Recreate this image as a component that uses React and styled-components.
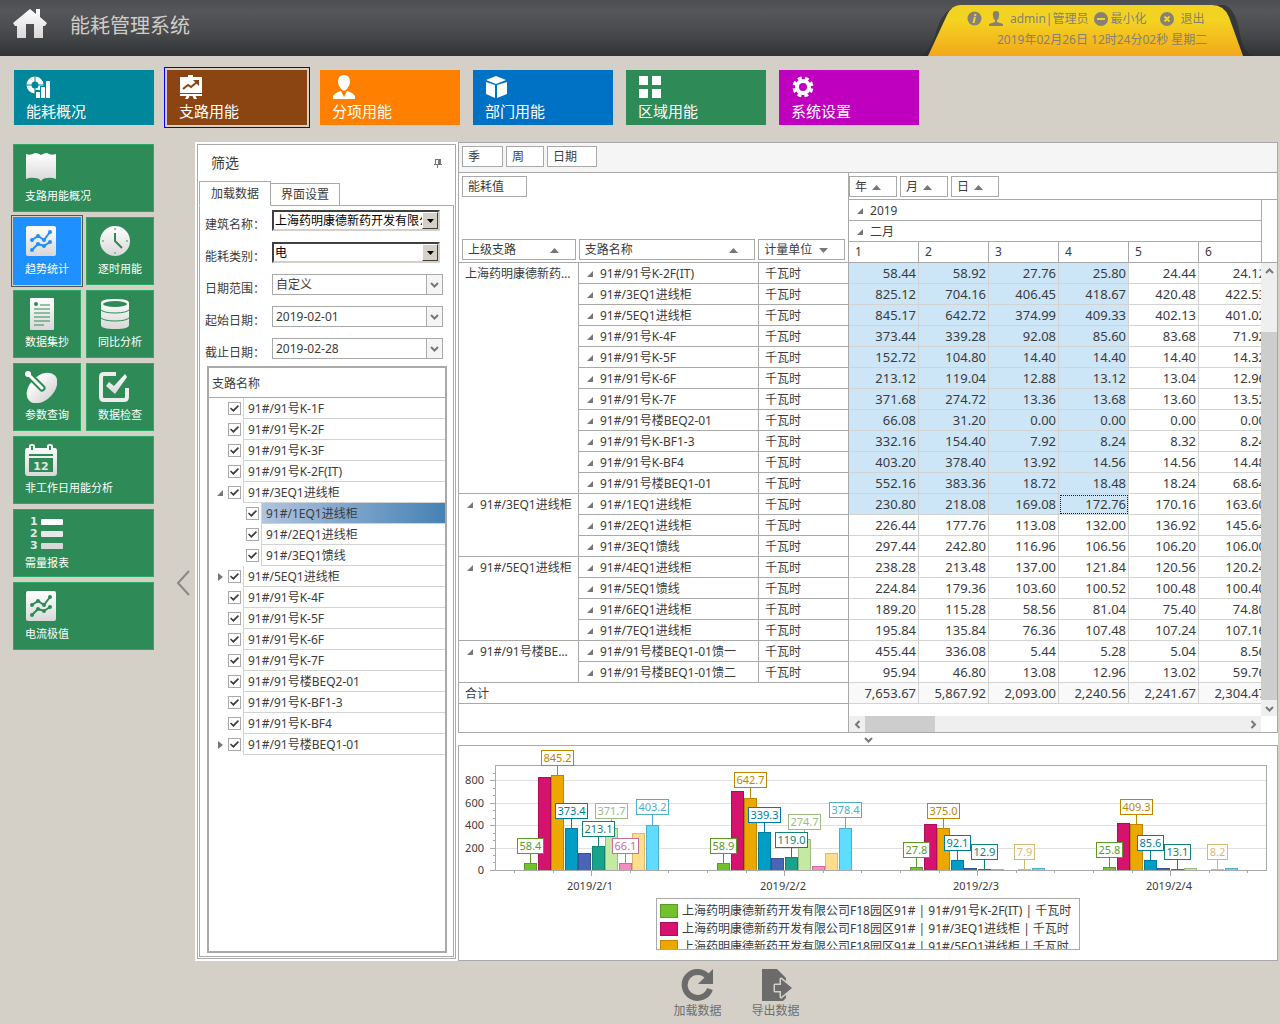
import React, { useState } from 'react';
import styled, { createGlobalStyle, css } from 'styled-components';

const GlobalStyle = createGlobalStyle`
  * {
    box-sizing: border-box;
  }
  body {
    margin: 0;
    background: #d4d0c8;
    color: #3b3b3b;
    font-family: 'Noto Sans', 'Noto Sans CJK SC', sans-serif;
    font-size: 12px;
    line-height: 16px;
  }
  button, select, input {
    font: inherit;
    color: inherit;
  }
  button {
    border: none;
    padding: 0;
    background: none;
    cursor: pointer;
  }
  svg {
    display: block;
    flex: none;
  }
`;

const Page = styled.div`
  display: flex;
  flex-direction: column;
  min-height: 100vh;
`;

/* ---------- header ---------- */

const Header = styled.header`
  display: flex;
  justify-content: space-between;
  height: 56px;
  padding-right: 37px;
  background: linear-gradient(#4d4e52, #55565a 20%, #4a4b4e 55%, #303436);
`;

const Brand = styled.div`
  display: flex;
  align-items: center;
  gap: 22px;
  padding: 0 0 8px 12px;
`;

const Title = styled.h1`
  margin: 0;
  padding-top: 4px;
  color: #d0cdc6;
  font-size: 20px;
  line-height: 28px;
  font-weight: 400;
`;

const Account = styled.div`
  position: relative;
  width: 315px;
  color: #858078;
  padding-top: 10px;
`;

const AccountShape = styled.svg`
  position: absolute;
  left: -8px;
  bottom: 0;
`;

const AccountRow = styled.div`
  position: relative;
  display: flex;
  align-items: center;
  height: 17px;
  padding-left: 39px;
`;

const AccountName = styled.span`
  margin: 0 6px;
`;

const AccountButton = styled.button`
  display: flex;
  align-items: center;
  gap: ${(p) => p.$gap || 2}px;
  margin-right: 14px;
`;

const Clock = styled.div`
  position: relative;
  padding: 5px 0 0 69px;
  white-space: nowrap;
`;

/* ---------- top navigation ---------- */

const TopNav = styled.nav`
  display: flex;
  gap: 13px;
  padding: 14px 14px 17px;
`;

const TopTile = styled.button`
  display: flex;
  flex-direction: column;
  align-items: flex-start;
  width: 140px;
  height: 55px;
  padding: 5px 12px 0;
  background: ${(p) => p.$color};
  color: #fff;
  font-size: 15px;
  line-height: 20px;
  text-align: left;
  outline: ${(p) => (p.$active ? '1px solid #0000ff' : 'none')};
  outline-offset: 2px;
  svg {
    margin-bottom: 2px;
  }
`;

/* ---------- left column ---------- */

const Body = styled.div`
  display: flex;
  flex: 1;
  padding: 0 2px 0 13px;
`;

const Sidebar = styled.nav`
  display: grid;
  grid-template-columns: 68px 68px;
  grid-auto-rows: 68px;
  gap: 5px;
  padding-top: 2px;
`;

const SideTile = styled.button`
  display: flex;
  flex-direction: column;
  align-items: flex-start;
  grid-column: span ${(p) => (p.$wide ? 2 : 1)};
  padding: 7px 0 0 11px;
  border: 1px solid #2fa866;
  background: #2e8b57;
  color: #fff;
  font-size: 11px;
  line-height: 16px;
  text-align: left;
  white-space: nowrap;
  ${(p) => p.$active && css`
    border-color: #1e90ff;
    background: #1e90ff;
    outline: 1px solid #555;
    outline-offset: 1px;
  `}
  svg {
    margin-bottom: 4px;
  }
`;

const Collapse = styled.button`
  display: flex;
  align-items: center;
  justify-content: flex-end;
  width: 41px;
  padding-right: 5px;
`;

const Content = styled.div`
  display: flex;
  flex-direction: column;
  flex: 1;
  min-width: 0;
`;

const Workspace = styled.main`
  display: flex;
  flex: 1;
  background: #fff;
`;

/* ---------- filter panel ---------- */

const FilterPanel = styled.section`
  display: flex;
  flex-direction: column;
  width: 259px;
  margin: 2px 2px 2px 2px;
  padding: 0 1px 1px;
  border: 1px solid #a9a9a9;
`;

const FilterHead = styled.div`
  display: flex;
  align-items: center;
  justify-content: space-between;
  height: 36px;
  padding: 0 12px;
`;

const FilterTitle = styled.h2`
  margin: 0;
  font-size: 14px;
  font-weight: 400;
`;

const Tabs = styled.div`
  display: flex;
  align-items: flex-end;
  &::after {
    content: '';
    flex: 1;
    border-bottom: 1px solid #a9a9a9;
  }
`;

const Tab = styled.button`
  width: ${(p) => (p.$active ? 72 : 69)}px;
  height: ${(p) => (p.$active ? 25 : 23)}px;
  padding-top: 1px;
  border: 1px solid #a9a9a9;
  border-bottom-color: ${(p) => (p.$active ? '#fff' : '#a9a9a9')};
  border-left-width: ${(p) => (p.$active ? 1 : 0)}px;
`;

const TabPage = styled.div`
  display: flex;
  flex-direction: column;
  flex: 1;
  padding: 0 4px 3px 3px;
  border: 1px solid #a9a9a9;
  border-top: none;
`;

const Field = styled.div`
  display: grid;
  grid-template-columns: 69px ${(p) => (p.$sunken ? '168px' : '171px')};
  height: 32px;
`;

const FieldLabel = styled.label`
  padding: 11px 0 0 2px;
`;

const SelectBox = styled.div`
  position: relative;
  height: 21px;
  margin-top: 4px;
  border: 1px solid #a9a9a9;
  ${(p) => p.$sunken && css`
    border-width: 2px;
    border-color: #404040 #d4d0c8 #d4d0c8 #404040;
    color: #000;
  `}
`;

const Select = styled.select`
  width: 100%;
  height: 100%;
  padding: 1px 16px 0 ${(p) => (p.$sunken ? 1 : 3)}px;
  border: none;
  border-radius: 0;
  background: #fff;
  appearance: none;
`;

const Arrow = styled.span`
  position: absolute;
  top: 0;
  right: 0;
  bottom: 0;
  display: grid;
  place-items: center;
  width: 16px;
  pointer-events: none;
  border-left: 1px solid #a9a9a9;
  background: #f5f5f5;
  ${(p) => p.$sunken && css`
    border: 1px solid;
    border-color: #fff #404040 #404040 #fff;
    background: #d4d0c8;
  `}
`;

const Tree = styled.div`
  flex: 1;
  margin: 0 2px 0 4px;
  border: 2px solid #a9a9a9;
`;

const TreeHead = styled.div`
  height: 30px;
  padding: 8px 3px 0;
  border-bottom: 1px solid #a9a9a9;
`;

const TreeRow = styled.div`
  display: flex;
  align-items: stretch;
  height: 21px;
  padding-left: ${(p) => (p.$level ? 24 : 6)}px;
`;

const TreeToggle = styled.span`
  display: flex;
  align-items: center;
  justify-content: center;
  width: 10px;
  margin-right: 3px;
`;

const Check = styled.input`
  display: grid;
  place-items: center;
  width: 13px;
  height: 13px;
  margin: 4px 2px 0 0;
  border: 1px solid #a9a9a9;
  background: #fff;
  appearance: none;
  &:checked::after {
    content: '';
    width: 9px;
    height: 7px;
    background: #3b3b3b;
    clip-path: polygon(0 50%, 12% 34%, 36% 64%, 88% 0, 100% 18%, 38% 100%);
  }
`;

const TreeLabel = styled.label`
  flex: 1;
  padding: 3px 4px 0;
  border-left: 1px solid #d3d3d3;
  border-bottom: 1px solid #d3d3d3;
  background: ${(p) => (p.$selected ? 'linear-gradient(90deg, #b0c4de, #4682b4)' : '#fff')};
`;

/* ---------- pivot ---------- */

const RightPane = styled.div`
  display: flex;
  flex-direction: column;
  flex: 1;
  min-width: 0;
`;

const Pivot = styled.section`
  border: 1px solid #a9a9a9;
`;

const FieldRow = styled.div`
  display: flex;
  gap: 3px;
  padding: 3px;
`;

const FilterFields = styled(FieldRow)`
  height: 30px;
  background: #f5f5f5;
  border-bottom: 1px solid #a9a9a9;
`;

const FieldButton = styled.button`
  display: flex;
  align-items: center;
  justify-content: ${(p) => (p.$spread ? 'space-between' : 'flex-start')};
  gap: 5px;
  width: ${(p) => p.$w}px;
  height: 21px;
  padding: 1px ${(p) => (p.$spread ? 16 : 4)}px 0 5px;
  border: 1px solid #a9a9a9;
  background: #fff;
`;

const PivotGrid = styled.div`
  display: grid;
  grid-template-columns: minmax(0, 1fr) 16px;
`;

const TableWrap = styled.div`
  overflow: hidden;
`;

const Table = styled.table`
  width: 810px;
  table-layout: fixed;
  border-collapse: separate;
  border-spacing: 0;
  th, td {
    height: 21px;
    padding: 0;
    font-weight: 400;
    text-align: left;
    line-height: 18px;
    white-space: nowrap;
    overflow: hidden;
    text-overflow: ellipsis;
    border: solid #a9a9a9;
    border-width: 0 1px 1px 0;
  }
`;

const CornerCell = styled.th`
  && {
    vertical-align: top;
  }
`;

const Corner = styled.div`
  display: flex;
  flex-direction: column;
  justify-content: space-between;
  height: 89px;
  ${FieldRow}:last-child {
    padding-bottom: 2px;
  }
`;

const ColumnFields = styled.th`
  && {
    height: 27px;
    border-right: none;
  }
  ${FieldRow} {
    padding: 1px 0 0 0;
  }
`;

const HeadCell = styled.th`
  && {
    padding-left: ${(p) => (p.$group ? 8 : 6)}px;
  }
`;

const RowHead = styled.th`
  && {
    padding: 0 4px 0 ${(p) => (p.$flush ? 6 : 8)}px;
    vertical-align: top;
    line-height: 20px;
  }
`;

const RowHeadInner = styled.div`
  display: flex;
  align-items: center;
  gap: 7px;
  height: 20px;
  padding-top: 1px;
  span {
    overflow: hidden;
    text-overflow: ellipsis;
  }
`;

const Value = styled.td`
  && {
    padding-right: 2px;
    font-size: 13px;
    text-align: right;
    text-overflow: clip;
    border-color: #d3d3d3;
    background: ${(p) => (p.$total ? '#f9f9f9' : p.$selected ? '#cde6f7' : '#fff')};
    outline: ${(p) => (p.$focused ? '1px dotted #222' : 'none')};
    outline-offset: -2px;
  }
`;

const Filler = styled.div`
  width: 390px;
  height: 12px;
  border-right: 1px solid #a9a9a9;
`;

const ScrollColumn = styled.div`
  display: flex;
  flex-direction: column;
`;

const ScrollTop = styled.div`
  height: 27px;
  border-bottom: 1px solid #a9a9a9;
`;

const ScrollHead = styled.div`
  height: 63px;
  border-left: 1px solid #a9a9a9;
  border-bottom: 1px solid #a9a9a9;
`;

const ScrollTrack = styled.div`
  display: flex;
  flex-direction: ${(p) => (p.$vertical ? 'column' : 'row')};
  justify-content: space-between;
  flex: 1;
  background: #efefef;
`;

const ScrollButton = styled.button`
  display: grid;
  place-items: center;
  width: 16px;
  height: 16px;
`;

const VThumb = styled.div`
  flex: 1;
  margin-top: 53px;
  background: #cdcdcd;
`;

const HThumb = styled.div`
  width: 70px;
  margin-right: auto;
  background: #cdcdcd;
`;

const ScrollRow = styled.div`
  display: flex;
  height: 16px;
  &::before {
    content: '';
    width: 390px;
    border-right: 1px solid #a9a9a9;
    box-sizing: border-box;
  }
`;

const Splitter = styled.div`
  display: flex;
  align-items: center;
  justify-content: center;
  height: 12px;
`;

/* ---------- chart ---------- */

const ChartPanel = styled.section`
  flex: 1;
  padding-bottom: 10px;
  border: 1px solid #a9a9a9;
`;

const Legend = styled.ul`
  width: 424px;
  height: 52px;
  margin: 0 auto;
  padding: 3px;
  overflow: hidden;
  list-style: none;
  border: 1px solid #a9a9a9;
`;

const LegendItem = styled.li`
  display: flex;
  align-items: center;
  gap: 4px;
  height: 18px;
  white-space: nowrap;
  &::before {
    content: '';
    box-sizing: border-box;
    width: 18px;
    height: 14px;
    background: ${(p) => p.$color};
    border: 1px solid ${(p) => p.$line};
  }
`;

/* ---------- footer ---------- */

const Footer = styled.footer`
  display: flex;
  justify-content: center;
  gap: 30px;
  height: 63px;
  padding-top: 7px;
`;

const FooterButton = styled.button`
  display: flex;
  flex-direction: column;
  align-items: center;
  gap: 1px;
  color: #6e6e6e;
  height: 51px;
`;

/* ---------- small glyphs ---------- */

const chevrons = {
  up: 'M2 7 L5.5 3.5 L9 7',
  down: 'M2 4 L5.5 7.5 L9 4',
  left: 'M7.5 2 L4 5.5 L7.5 9',
  right: 'M3.5 2 L7 5.5 L3.5 9',
};

const Chevron = ({ dir }) => (
  <svg width="11" height="11">
    <path d={chevrons[dir]} fill="none" stroke="#777" strokeWidth="2" />
  </svg>
);

const Sort = ({ down }) => (
  <svg width="9" height="5">
    <path d={down ? 'M0 0 H9 L4.5 5 Z' : 'M0 5 H9 L4.5 0 Z'} fill="#777" />
  </svg>
);

const Expanded = () => (
  <svg width="6" height="6"><path d="M6 0 V6 H0 Z" fill="#777" /></svg>
);

const Collapsed = () => (
  <svg width="5" height="8"><path d="M0 0 L5 4 L0 8 Z" fill="#777" /></svg>
);

const SHINE = 'url(#shine)';

const TrendIcon = ({ hole }) => (
  <svg width="32" height="32">
    <rect x="1" y="1" width="30" height="30" rx="2" fill={SHINE} />
    <g stroke={hole} fill={hole} strokeWidth="2">
      <path d="M7 15 L13 11 L19 15 L25 7 M7 25 L13 19 L19 21 L25 17" fill="none" />
      {[[7, 15], [13, 11], [19, 15], [25, 7], [7, 25], [13, 19], [19, 21], [25, 17]].map(([x, y]) => (
        <circle key={`${x}-${y}`} cx={x} cy={y} r="1" />
      ))}
    </g>
  </svg>
);

const sideIcons = {
  book: (
    <svg width="32" height="32">
      <path d="M1 2 Q5 4 10 1 Q13 1 16 3 Q19 1 22 1 Q26 4 31 2 V27 Q26 25 22 26 Q18 26 16 29 Q14 26 10 26 Q5 25 1 27 Z" fill={SHINE} />
    </svg>
  ),
  clock: (
    <svg width="32" height="32">
      <circle cx="17" cy="16" r="15" fill={SHINE} />
      <path d="M17 8 V16 L24 23" fill="none" stroke="#2e8b57" strokeWidth="2" />
      <path d="M16 3h2v2h-2z M16 27h2v2h-2z M4 15h2v2h-2z M28 15h2v2h-2z" fill="#8fbfa3" />
    </svg>
  ),
  doc: (
    <svg width="32" height="32">
      <rect x="5" y="0" width="24" height="32" rx="1" fill={SHINE} />
      <circle cx="11" cy="6" r="2" fill="#2e8b57" />
      <path d="M15 7h10 M9 11h16 M9 15h16 M9 19h16 M9 23h16 M9 27h10" stroke="#2e8b57" />
    </svg>
  ),
  database: (
    <svg width="32" height="32">
      <path d="M3 5 Q3 1 17 1 Q31 1 31 5 V27 Q31 31 17 31 Q3 31 3 27 Z" fill={SHINE} />
      <ellipse cx="17" cy="6" rx="12" ry="3" fill="#2e8b57" />
      <path d="M2 11 Q5 15 17 15 Q29 15 32 11 M2 19 Q5 23 17 23 Q29 23 32 19" fill="none" stroke="#2e8b57" />
    </svg>
  ),
  dish: (
    <svg width="32" height="32">
      <ellipse cx="17" cy="17" rx="18" ry="12" transform="rotate(-45 17 17)" fill={SHINE} />
      <path d="M3 3 L17 17" stroke="#2e8b57" strokeWidth="7" strokeLinecap="round" />
      <path d="M3 3 L17 17" stroke="#fff" strokeWidth="3" strokeLinecap="round" />
      <circle cx="3" cy="3" r="3" fill="#fff" />
    </svg>
  ),
  check: (
    <svg width="32" height="32">
      <path d="M18 3 H6 Q3 3 3 6 V26 Q3 29 6 29 H26 Q29 29 29 26 V17" fill="none" stroke="#ececec" strokeWidth="4" />
      <path d="M8 15 L11 11 L16 15 L27 3 L29 6 L17 23 Z" fill={SHINE} />
    </svg>
  ),
  calendar: (
    <svg width="32" height="32">
      <path d="M2 4 H4 V2 Q4 0 7 0 Q10 0 10 2 V4 H22 V2 Q22 0 25 0 Q28 0 28 2 V4 H30 Q32 4 32 7 V29 Q32 32 29 32 H3 Q0 32 0 29 V7 Q0 4 2 4 Z" fill={SHINE} />
      <path d="M7 2v4 M25 2v4" stroke="#2e8b57" strokeWidth="2" />
      <path d="M4 11 H28" stroke="#2e8b57" strokeWidth="2" />
      <rect x="4" y="14" width="24" height="14" fill="#2e8b57" />
      <text x="16" y="26" textAnchor="middle" fontSize="11" fontWeight="700" fontFamily="DejaVu Sans, sans-serif" fill="#e6e6e6">12</text>
    </svg>
  ),
  list: (
    <svg width="40" height="34">
      <g fontSize="11" fontWeight="700" fontFamily="DejaVu Sans, sans-serif" fill="#dfe8e2">
        <text x="5" y="8">1</text>
        <text x="5" y="20">2</text>
        <text x="5" y="32">3</text>
      </g>
      <rect x="16" y="2" width="22" height="6" rx="1" fill="#fff" />
      <rect x="16" y="14" width="22" height="6" rx="1" fill="#e8e8e8" />
      <rect x="16" y="26" width="22" height="6" rx="1" fill="#d8d8d8" />
    </svg>
  ),
  trendBlue: <TrendIcon hole="#1e90ff" />,
  trend: <TrendIcon hole="#2e8b57" />,
};

const topIcons = {
  overview: (
    <svg width="26" height="24">
      <circle cx="9" cy="10" r="6" fill="none" stroke="#fff" strokeWidth="5" />
      <path d="M9 1v6 M9 13v6 M0 10h6 M12 10h6" stroke="#00879c" strokeWidth="1" />
      <path d="M9 15h5v-4h5v-5h6v18h-16z" fill="#00879c" />
      <path d="M10 17h4v6h-4z M15 12h4v11h-4z M20 6h4v17h-4z" fill="#fff" />
    </svg>
  ),
  board: (
    <svg width="24" height="24">
      <path d="M9 0h5v2h9v16H1V2h8z M1 19h22v2H1z M8 20h3l-2 4H6z M13 20h3l2 4h-3z" fill="#fff" />
      <path d="M0 18.500H23" stroke="#8b4513" />
      <path d="M4 14 L9 10 L12 12 L18 7" fill="none" stroke="#8b4513" strokeWidth="2" />
      <path d="M14 5h6v6z" fill="#8b4513" />
    </svg>
  ),
  person: (
    <svg width="24" height="24">
      <path d="M12 0 Q18 0 18 7 Q18 10 15 14 L12 16 L9 14 Q6 10 6 7 Q6 0 12 0 Z" fill="#fff" />
      <path d="M1 24 V21 Q4 17 9 16 L12 22 L15 16 Q20 17 23 21 V24 Z" fill="#fff" />
    </svg>
  ),
  box: (
    <svg width="24" height="24">
      <path d="M11 1 L21 5 L11 9 L1 5 Z M1 7 L10 10 V23 L1 19 Z M22 7 L12 10 V23 L22 19 Z" fill="#fff" />
    </svg>
  ),
  squares: (
    <svg width="24" height="24">
      <path d="M1 1h9v9H1z M14 1h9v9h-9z M1 14h9v9H1z M14 14h9v9h-9z" fill="#fff" />
    </svg>
  ),
  gear: (
    <svg width="24" height="24">
      <circle cx="12" cy="12" r="6" fill="none" stroke="#fff" strokeWidth="4" />
      <circle cx="12" cy="12" r="9" fill="none" stroke="#fff" strokeWidth="3" strokeDasharray="4 3.070" transform="rotate(10 12 12)" />
    </svg>
  ),
};

const HomeIcon = () => (
  <svg width="36" height="30">
    <path d="M18 0 L24 5 V0 H28 V8 L35 14 L33 17 H31 V29 H22 V15 H14 V29 H5 V17 H3 L1 14 Z" fill={SHINE} />
  </svg>
);

const RefreshIcon = () => (
  <svg width="34" height="34">
    <path d="M28 9 A13 13 0 1 0 30 21" fill="none" stroke="#6b6b6b" strokeWidth="6" />
    <path d="M33 1 V16 H18 Z" fill="#6b6b6b" />
  </svg>
);

const ExportIcon = () => (
  <svg width="34" height="34">
    <path d="M3 1 H18 L27 10 V30 L24 33 H3 Z" fill="#6b6b6b" />
    <path d="M16 17 H22 V11 L33 20 L22 29 V23 H16 Z" fill="#d4d0c8" stroke="#d4d0c8" strokeWidth="3" strokeLinejoin="round" />
    <path d="M16 17 H22 V11 L33 20 L22 29 V23 H16 Z" fill="#6b6b6b" />
  </svg>
);

/* ---------- data ---------- */

const topTiles = [
  ['能耗概况', '#00879c', 'overview'],
  ['支路用能', '#8b4513', 'board'],
  ['分项用能', '#ff8000', 'person'],
  ['部门用能', '#0072c6', 'box'],
  ['区域用能', '#2e8b57', 'squares'],
  ['系统设置', '#bf00bf', 'gear'],
];

const sideTiles = [
  { label: '支路用能概况', icon: 'book', wide: true },
  { label: '趋势统计', icon: 'trendBlue', active: true },
  { label: '逐时用能', icon: 'clock' },
  { label: '数据集抄', icon: 'doc' },
  { label: '同比分析', icon: 'database' },
  { label: '参数查询', icon: 'dish' },
  { label: '数据检查', icon: 'check' },
  { label: '非工作日用能分析', icon: 'calendar', wide: true },
  { label: '需量报表', icon: 'list', wide: true },
  { label: '电流极值', icon: 'trend', wide: true },
];

const filters = [
  { id: 'building', label: '建筑名称：', value: '上海药明康德新药开发有限公司', sunken: true },
  { id: 'energy', label: '能耗类别：', value: '电', sunken: true },
  { id: 'range', label: '日期范围：', value: '自定义' },
  { id: 'start', label: '起始日期：', value: '2019-02-01' },
  { id: 'end', label: '截止日期：', value: '2019-02-28' },
];

const tree = [
  { name: '91#/91号K-1F' },
  { name: '91#/91号K-2F' },
  { name: '91#/91号K-3F' },
  { name: '91#/91号K-2F(IT)' },
  { name: '91#/3EQ1进线柜', open: true },
  { name: '91#/1EQ1进线柜', level: 1, selected: true },
  { name: '91#/2EQ1进线柜', level: 1 },
  { name: '91#/3EQ1馈线', level: 1 },
  { name: '91#/5EQ1进线柜', open: false },
  { name: '91#/91号K-4F' },
  { name: '91#/91号K-5F' },
  { name: '91#/91号K-6F' },
  { name: '91#/91号K-7F' },
  { name: '91#/91号楼BEQ2-01' },
  { name: '91#/91号K-BF1-3' },
  { name: '91#/91号K-BF4' },
  { name: '91#/91号楼BEQ1-01', open: false },
];

const groups = [
  {
    name: '上海药明康德新药开发有限公司',
    root: true,
    rows: [
      ['91#/91号K-2F(IT)', '58.44', '58.92', '27.76', '25.80', '24.44', '24.12'],
      ['91#/3EQ1进线柜', '825.12', '704.16', '406.45', '418.67', '420.48', '422.53'],
      ['91#/5EQ1进线柜', '845.17', '642.72', '374.99', '409.33', '402.13', '401.02'],
      ['91#/91号K-4F', '373.44', '339.28', '92.08', '85.60', '83.68', '71.92'],
      ['91#/91号K-5F', '152.72', '104.80', '14.40', '14.40', '14.40', '14.32'],
      ['91#/91号K-6F', '213.12', '119.04', '12.88', '13.12', '13.04', '12.96'],
      ['91#/91号K-7F', '371.68', '274.72', '13.36', '13.68', '13.60', '13.52'],
      ['91#/91号楼BEQ2-01', '66.08', '31.20', '0.00', '0.00', '0.00', '0.00'],
      ['91#/91号K-BF1-3', '332.16', '154.40', '7.92', '8.24', '8.32', '8.24'],
      ['91#/91号K-BF4', '403.20', '378.40', '13.92', '14.56', '14.56', '14.48'],
      ['91#/91号楼BEQ1-01', '552.16', '383.36', '18.72', '18.48', '18.24', '68.64'],
    ],
  },
  {
    name: '91#/3EQ1进线柜',
    rows: [
      ['91#/1EQ1进线柜', '230.80', '218.08', '169.08', '172.76', '170.16', '163.60'],
      ['91#/2EQ1进线柜', '226.44', '177.76', '113.08', '132.00', '136.92', '145.64'],
      ['91#/3EQ1馈线', '297.44', '242.80', '116.96', '106.56', '106.20', '106.00'],
    ],
  },
  {
    name: '91#/5EQ1进线柜',
    rows: [
      ['91#/4EQ1进线柜', '238.28', '213.48', '137.00', '121.84', '120.56', '120.24'],
      ['91#/5EQ1馈线', '224.84', '179.36', '103.60', '100.52', '100.48', '100.40'],
      ['91#/6EQ1进线柜', '189.20', '115.28', '58.56', '81.04', '75.40', '74.80'],
      ['91#/7EQ1进线柜', '195.84', '135.84', '76.36', '107.48', '107.24', '107.16'],
    ],
  },
  {
    name: '91#/91号楼BEQ1-01',
    rows: [
      ['91#/91号楼BEQ1-01馈一', '455.44', '336.08', '5.44', '5.28', '5.04', '8.56'],
      ['91#/91号楼BEQ1-01馈二', '95.94', '46.80', '13.08', '12.96', '13.02', '59.76'],
    ],
  },
];

const totals = ['7,653.67', '5,867.92', '2,093.00', '2,240.56', '2,241.67', '2,304.47'];

// fill, outline
const seriesColors = [
  ['#72c22e', '#5b9b25'],
  ['#d5126d', '#aa0e57'],
  ['#eda800', '#be8600'],
  ['#009dc6', '#007d9e'],
  ['#4965b8', '#3a5193'],
  ['#19a28c', '#148270'],
  ['#c3e9a2', '#9cba82'],
  ['#f58ebd', '#cc6c98'],
  ['#ffdd8a', '#d6ba74'],
  ['#5fdcff', '#4cb0cc'],
];

// labels: [series, y of the label box centre]
const days = [
  { date: '2019/2/1', labels: [[0, 100], [2, 12], [3, 65], [5, 83], [6, 65], [7, 100], [9, 61]] },
  { date: '2019/2/2', labels: [[0, 100], [2, 34], [3, 69], [6, 76], [5, 94], [9, 64]] },
  { date: '2019/2/3', labels: [[0, 104], [2, 65], [3, 97], [5, 106], [8, 106]] },
  { date: '2019/2/4', labels: [[0, 104], [2, 61], [3, 97], [5, 106], [8, 106]] },
];

const legend = ['91#/91号K-2F(IT)', '91#/3EQ1进线柜', '91#/5EQ1进线柜'];

/* ---------- components ---------- */

const ZERO = 124;
const LEFT = 36;
const STEP = 193;
const BAR = 13.5;
const toY = (v) => ZERO - Math.round(v * 0.1122);
const barX = (day, series) => Math.floor(LEFT + STEP * (day + 0.5) - 67 + series * BAR);
const chartValue = (day, series) => Number(groups[0].rows[series][day + 1]);

const Chart = () => (
  <svg viewBox="0 0 818 152" width="100%" fontSize="11" fill="#3b3b3b" shapeRendering="crispEdges">
    {[200, 400, 600, 800].map((v) => (
      <path key={v} d={`M${LEFT} ${toY(v) + 0.5} H808`} stroke="#e0e0e0" />
    ))}
    {[0, 200, 400, 600, 800].map((v) => (
      <g key={v}>
        <path d={`M31 ${toY(v) + 0.5} H${LEFT}`} stroke="#a9a9a9" />
        <text x="25" y={toY(v) + 4} textAnchor="end">{v}</text>
      </g>
    ))}
    {[67, 133, 267, 333, 467, 533, 667, 733, 867].map((v) => (
      <path key={v} d={`M34 ${toY(v) + 0.5} H${LEFT}`} stroke="#a9a9a9" />
    ))}
    {days.map((day, d) => (
      <g key={day.date}>
        {seriesColors.map(([fill, line], s) => {
          const h = ZERO - toY(chartValue(d, s));
          return h > 0 && (
            <rect key={fill} x={barX(d, s) + 0.5} y={ZERO - h + 0.5} width="12" height={h} fill={fill} stroke={line} />
          );
        })}
      </g>
    ))}
    <rect x={LEFT + 0.5} y="19.500" width="771" height="105" fill="none" stroke="#a9a9a9" />
    {days.map((day, d) => {
      const mid = Math.floor(LEFT + STEP * (d + 0.5));
      return (
        <g key={day.date}>
          {[-77, -38, 39, 77].map((dx) => (
            <path key={dx} d={`M${mid + dx + 0.5} 125 v2`} stroke="#a9a9a9" />
          ))}
          <path d={`M${mid + 0.5} 125 v5`} stroke="#a9a9a9" />
          <text x={mid - 1} y="144" textAnchor="middle">{day.date}</text>
          {day.labels.map(([s, y]) => (
            <path key={s} d={`M${barX(d, s) + 6.5} ${y} V${toY(chartValue(d, s))}`} stroke={seriesColors[s][1]} />
          ))}
          {day.labels.map(([s, y]) => {
            const text = chartValue(d, s).toFixed(1);
            const w = text.length * 6 + 2;
            const x = barX(d, s) + 6;
            return (
              <g key={s}>
                <rect x={x - w / 2 + 0.5} y={y - 7.5} width={w} height="15" fill="#fff" stroke={seriesColors[s][1]} />
                <text x={x + 0.5} y={y + 4} textAnchor="middle" fill={seriesColors[s][1]}>{text}</text>
              </g>
            );
          })}
        </g>
      );
    })}
  </svg>
);

const TreeItem = ({ item, index }) => {
  const [checked, setChecked] = useState(true);
  return (
    <TreeRow $level={item.level}>
      <TreeToggle>
        {item.open === true && <Expanded />}
        {item.open === false && <Collapsed />}
      </TreeToggle>
      <Check type="checkbox" id={`branch-${index}`} checked={checked} onChange={() => setChecked(!checked)} />
      <TreeLabel htmlFor={`branch-${index}`} $selected={item.selected}>{item.name}</TreeLabel>
    </TreeRow>
  );
};

const Filter = () => (
  <FilterPanel>
    <FilterHead>
      <FilterTitle>筛选</FilterTitle>
      <svg width="8" height="9">
        <path d="M1.500 0 V5 M0 5.500 H8 M3.500 6 V9 M1 0.500 H6" stroke="#777" fill="none" />
        <path d="M4 0h3v5H4z" fill="#777" />
      </svg>
    </FilterHead>
    <Tabs>
      <Tab $active>加载数据</Tab>
      <Tab>界面设置</Tab>
    </Tabs>
    <TabPage>
      {filters.map((f) => (
        <Field key={f.id} $sunken={f.sunken}>
          <FieldLabel htmlFor={f.id}>{f.label}</FieldLabel>
          <SelectBox $sunken={f.sunken}>
            <Select id={f.id} $sunken={f.sunken}>
              <option>{f.value}</option>
            </Select>
            <Arrow $sunken={f.sunken}>
              {f.sunken
                ? <svg width="7" height="4"><path d="M0 0 H7 L3.500 4 Z" /></svg>
                : <Chevron dir="down" />}
            </Arrow>
          </SelectBox>
        </Field>
      ))}
      <Tree>
        <TreeHead>支路名称</TreeHead>
        {tree.map((item, i) => <TreeItem key={item.name} item={item} index={i} />)}
      </Tree>
    </TabPage>
  </FilterPanel>
);

const PivotTable = () => {
  let n = -1;
  return (
    <Table>
      <colgroup>
        <col width="120" />
        <col width="180" />
        <col width="90" />
        {totals.map((t) => <col key={t} width="70" />)}
      </colgroup>
      <thead>
        <tr>
          <CornerCell colSpan={3} rowSpan={4}>
            <Corner>
              <FieldRow><FieldButton $w={65}>能耗值</FieldButton></FieldRow>
              <FieldRow>
                <FieldButton $w={114} $spread>上级支路<Sort /></FieldButton>
                <FieldButton $w={177} $spread>支路名称<Sort /></FieldButton>
                <FieldButton $w={87} $spread>计量单位<Sort down /></FieldButton>
              </FieldRow>
            </Corner>
          </CornerCell>
          <ColumnFields colSpan={6}>
            <FieldRow>
              <FieldButton $w={48}>年<Sort /></FieldButton>
              <FieldButton $w={48}>月<Sort /></FieldButton>
              <FieldButton $w={48}>日<Sort /></FieldButton>
            </FieldRow>
          </ColumnFields>
        </tr>
        <tr><HeadCell colSpan={6} $group><RowHeadInner><Expanded />2019</RowHeadInner></HeadCell></tr>
        <tr><HeadCell colSpan={6} $group><RowHeadInner><Expanded />二月</RowHeadInner></HeadCell></tr>
        <tr>
          {[1, 2, 3, 4, 5, 6].map((d) => <HeadCell key={d}>{d}</HeadCell>)}
        </tr>
      </thead>
      <tbody>
        {groups.map((group) => group.rows.map(([name, ...values], i) => {
          n += 1;
          const row = n;
          return (
            <tr key={name}>
              {i === 0 && (
                <RowHead rowSpan={group.rows.length} $flush={group.root}>
                  <RowHeadInner>{!group.root && <Expanded />}<span>{group.name}</span></RowHeadInner>
                </RowHead>
              )}
              <RowHead><RowHeadInner><Expanded /><span>{name}</span></RowHeadInner></RowHead>
              <RowHead $flush><RowHeadInner>千瓦时</RowHeadInner></RowHead>
              {values.map((v, c) => (
                <Value key={c} $selected={row < 12 && c < 4} $focused={row === 11 && c === 3}>{v}</Value>
              ))}
            </tr>
          );
        }))}
        <tr>
          <RowHead colSpan={3} $flush><RowHeadInner>合计</RowHeadInner></RowHead>
          {totals.map((t) => <Value key={t} $total>{t}</Value>)}
        </tr>
      </tbody>
    </Table>
  );
};

const App = () => (
  <Page>
    <GlobalStyle />
    <svg width="0" height="0" style={{ position: 'absolute' }}>
      <defs>
        <linearGradient id="shine" x1="0" y1="0" x2="0" y2="1">
          <stop offset="0" stopColor="#fff" />
          <stop offset="1" stopColor="#d8d8d8" />
        </linearGradient>
        <linearGradient id="amber" x1="0" y1="0" x2="0" y2="1">
          <stop offset="0.3" stopColor="#f3d321" />
          <stop offset="1" stopColor="#f3a81b" />
        </linearGradient>
      </defs>
    </svg>

    <Header>
      <Brand>
        <HomeIcon />
        <Title>能耗管理系统</Title>
      </Brand>
      <Account>
        <AccountShape width="334" height="51">
          <path d="M0 51 Q10 48 17 24 Q25 0 44 0 H304 Q316 3 320 30 Q324 49 334 51 Z" fill="#2b2e30" opacity="0.700" />
          <path d="M8 51 L27 10 Q32 0 40 0 H292 Q304 0 309 12 L323 51 Z" fill="url(#amber)" />
        </AccountShape>
        <AccountRow>
          <svg width="15" height="15">
            <circle cx="7.500" cy="7.500" r="7" fill="#858078" />
            <path d="M8.500 3 L8 5 M8 6 L6.500 12" stroke="#f3d321" strokeWidth="2" />
          </svg>
          <svg width="16" height="15" style={{ marginLeft: 6 }}>
            <path d="M8 0 Q12 0 11 5 Q11 8 9 9 V11 L15 13 V15 H1 V13 L7 11 V9 Q5 8 5 5 Q4 0 8 0 Z" fill="#858078" />
          </svg>
          <AccountName>admin|管理员</AccountName>
          <AccountButton>
            <svg width="14" height="14">
              <circle cx="7" cy="7" r="7" fill="#858078" />
              <path d="M3 7 H11" stroke="#f3d321" strokeWidth="2" />
            </svg>
            最小化
          </AccountButton>
          <AccountButton $gap={6}>
            <svg width="14" height="14">
              <circle cx="7" cy="7" r="7" fill="#858078" />
              <path d="M4.500 4.500 L9.500 9.500 M9.500 4.500 L4.500 9.500" stroke="#f3d321" strokeWidth="2" />
            </svg>
            退出
          </AccountButton>
        </AccountRow>
        <Clock>2019年02月26日 12时24分02秒 星期二</Clock>
      </Account>
    </Header>

    <TopNav>
      {topTiles.map(([label, color, icon]) => (
        <TopTile key={label} $color={color} $active={icon === 'board'}>
          {topIcons[icon]}
          {label}
        </TopTile>
      ))}
    </TopNav>

    <Body>
      <Sidebar>
        {sideTiles.map((t) => (
          <SideTile key={t.label} $wide={t.wide} $active={t.active}>
            {sideIcons[t.icon]}
            {t.label}
          </SideTile>
        ))}
      </Sidebar>
      <Collapse aria-label="收起">
        <svg width="14" height="26"><path d="M13 1 L2 13 L13 25" fill="none" stroke="#888" strokeWidth="2" /></svg>
      </Collapse>
      <Content>
        <Workspace>
          <Filter />
          <RightPane>
            <Pivot>
              <FilterFields>
                <FieldButton $w={41}>季</FieldButton>
                <FieldButton $w={38}>周</FieldButton>
                <FieldButton $w={50}>日期</FieldButton>
              </FilterFields>
              <PivotGrid>
                <TableWrap>
                  <PivotTable />
                  <Filler />
                </TableWrap>
                <ScrollColumn>
                  <ScrollTop />
                  <ScrollHead />
                  <ScrollTrack $vertical>
                    <ScrollButton aria-label="上"><Chevron dir="up" /></ScrollButton>
                    <VThumb />
                    <ScrollButton aria-label="下"><Chevron dir="down" /></ScrollButton>
                  </ScrollTrack>
                </ScrollColumn>
                <ScrollRow>
                  <ScrollTrack>
                    <ScrollButton aria-label="左"><Chevron dir="left" /></ScrollButton>
                    <HThumb />
                    <ScrollButton aria-label="右"><Chevron dir="right" /></ScrollButton>
                  </ScrollTrack>
                </ScrollRow>
              </PivotGrid>
            </Pivot>
            <Splitter><Chevron dir="down" /></Splitter>
            <ChartPanel>
              <Chart />
              <Legend>
                {legend.map((name, i) => (
                  <LegendItem key={name} $color={seriesColors[i][0]} $line={seriesColors[i][1]}>
                    上海药明康德新药开发有限公司F18园区91# | {name} | 千瓦时
                  </LegendItem>
                ))}
              </Legend>
            </ChartPanel>
          </RightPane>
        </Workspace>
        <Footer>
          <FooterButton><RefreshIcon />加载数据</FooterButton>
          <FooterButton><ExportIcon />导出数据</FooterButton>
        </Footer>
      </Content>
    </Body>
  </Page>
);

export default App;
